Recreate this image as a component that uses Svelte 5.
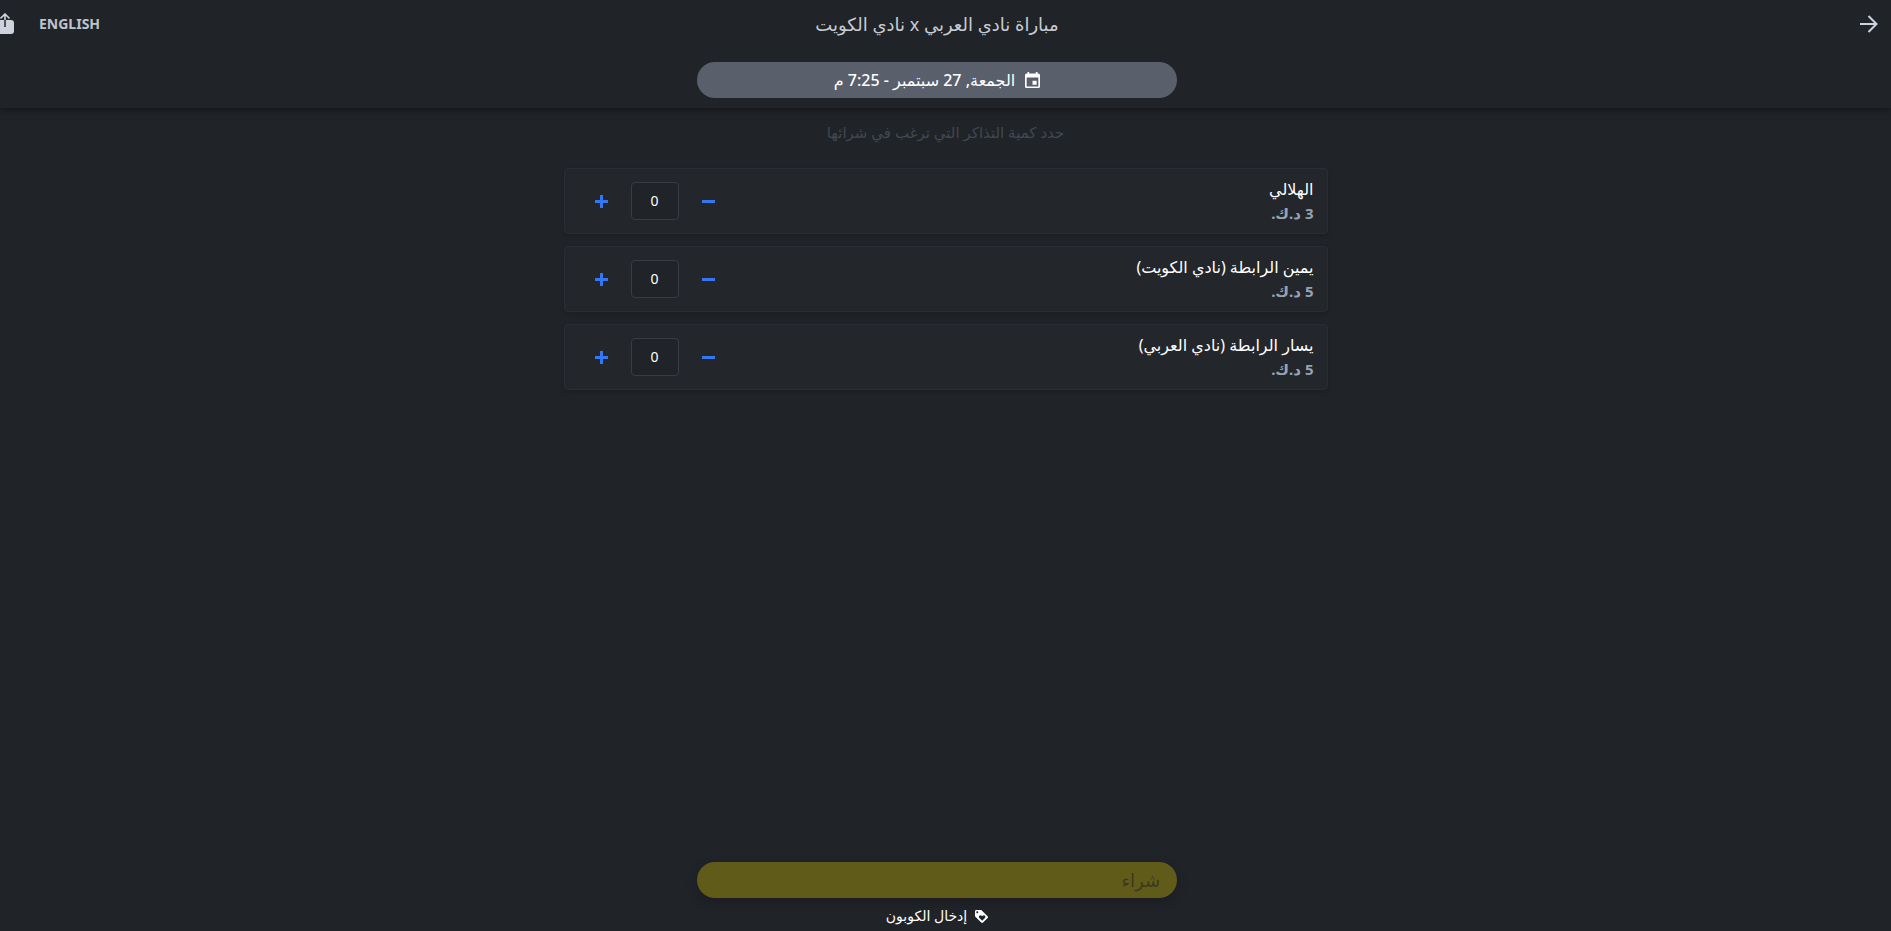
<script>
  let tickets = $state([
    { id: "hilali", name: "الهلالي", price: 3, qty: 0 },
    { id: "right", name: "يمين الرابطة (نادي الكويت)", price: 5, qty: 0 },
    { id: "left", name: "يسار الرابطة (نادي العربي)", price: 5, qty: 0 },
  ]);

  let total = $derived(tickets.reduce((sum, t) => sum + Number(t.qty), 0));
</script>

<div class="page" dir="rtl">
  <header>
    <div class="top-row">
      <a class="back" href="#back" aria-label="رجوع">
        <svg viewBox="0 0 18 18" width="18" height="18">
          <path d="M0 9h16M8.500 1l8 8-8 8" fill="none" stroke="currentColor" stroke-width="2" />
        </svg>
      </a>
      <h1>مباراة نادي العربي x نادي الكويت</h1>
      <div class="actions">
        <button class="lang" lang="en">ENGLISH</button>
        <button class="share" aria-label="مشاركة">
          <svg viewBox="0 0 18 22" width="18" height="22">
            <path d="M3 7h12a3 3 0 0 1 3 3v8a3 3 0 0 1-3 3H3a3 3 0 0 1-3-3v-8a3 3 0 0 1 3-3z" fill="currentColor" />
            <path d="M9 7v7" stroke="#4d525a" stroke-width="2" />
            <path d="M9 1v6M4.500 5.500L9 1l4.500 4.500" fill="none" stroke="currentColor" stroke-width="1.600" />
          </svg>
        </button>
      </div>
    </div>
    <button class="pill date">
      <svg viewBox="3 1 18 20" width="15" height="16" preserveAspectRatio="none">
        <path fill="currentColor" d="M17 12h-5v5h5v-5zM16 1v2H8V1H6v2H5c-1.110 0-1.990.9-1.990 2L3 19c0 1.100.89 2 2 2h14c1.100 0 2-.9 2-2V5c0-1.100-.9-2-2-2h-1V1h-2zm3 18H5V8h14v11z" />
      </svg>
      <span>الجمعة, 27 سبتمبر - 7:25 م</span>
    </button>
  </header>

  <main>
    <p class="hint">حدد كمية التذاكر التي ترغب في شرائها</p>
    <ul class="tickets">
      {#each tickets as ticket (ticket.id)}
        <li class="ticket">
          <div class="info">
            <label for={ticket.id}>{ticket.name}</label>
            <span class="price">{ticket.price} د.ك.</span>
          </div>
          <div class="counter">
            <button aria-label="إنقاص" onclick={() => (ticket.qty = Math.max(0, ticket.qty - 1))}>
              <svg viewBox="0 0 13 14" width="13" height="14"><path d="M0 7.500h13" /></svg>
            </button>
            <input id={ticket.id} type="text" inputmode="numeric" bind:value={ticket.qty} />
            <button aria-label="زيادة" onclick={() => ticket.qty++}>
              <svg viewBox="0 0 13 14" width="13" height="14"><path d="M0 7.500h13M6.500 1v13" /></svg>
            </button>
          </div>
        </li>
      {/each}
    </ul>
  </main>

  <footer>
    <button class="pill buy" disabled={total === 0}>شراء</button>
    <button class="coupon">
      <svg viewBox="2 2 20 20" width="13" height="13">
        <path fill="currentColor" d="M21.410 11.580l-9-9C12.050 2.220 11.550 2 11 2H4c-1.100 0-2 .9-2 2v7c0 .55.220 1.050.59 1.420l9 9c.36.360.860.580 1.410.580.550 0 1.050-.220 1.410-.590l7-7c.370-.360.590-.860.590-1.410 0-.550-.230-1.060-.590-1.420zM5.500 7C4.670 7 4 6.330 4 5.500S4.670 4 5.500 4 7 4.670 7 5.500 6.330 7 5.500 7zM17.270 14.270L13 18.540l-4.270-4.270C8.280 13.810 8 13.190 8 12.500c0-1.380 1.120-2.500 2.500-2.500.69 0 1.320.280 1.770.740l.73.720.73-.73c.45-.45 1.080-.73 1.770-.73 1.380 0 2.500 1.120 2.500 2.500 0 .69-.28 1.320-.73 1.770z" fill-rule="evenodd" />
      </svg>
      <span>إدخال الكوبون</span>
    </button>
  </footer>
</div>

<style>
  :global(body) {
    background: #202328;
  }

  .page {
    display: flex;
    flex-direction: column;
    min-height: 100vh;
    overflow: hidden;
    color: #fff;
    font-family: "Noto Sans", "DejaVu Sans", sans-serif;
    font-size: 16px;
    line-height: 24px;
  }

  button,
  input {
    margin: 0;
    padding: 0;
    border: 0;
    background: none;
    color: inherit;
    font: inherit;
  }

  button {
    cursor: pointer;
  }

  svg {
    display: block;
    flex: none;
  }

  header {
    display: flex;
    flex-direction: column;
    align-items: center;
    gap: 14px;
    padding: 0 17px 10px 0;
    background: #202328;
    box-shadow: 0 1px 8px rgba(0, 0, 0, 0.5);
  }

  .top-row {
    display: grid;
    grid-template-columns: 1fr auto 1fr;
    align-items: center;
    width: 100%;
    height: 48px;
    color: #ccd3dc;
  }

  .back {
    justify-self: start;
    margin-right: -4px;
    color: inherit;
  }

  h1 {
    margin: 0;
    color: #c8ccd2;
    font-size: 18px;
    font-weight: 400;
  }

  .actions {
    display: flex;
    align-items: center;
    justify-self: end;
    gap: 25px;
    margin-left: -4px;
  }

  .lang {
    color: #bfc4cb;
    font-size: 14px;
    font-weight: 700;
  }

  .pill {
    display: flex;
    align-items: center;
    box-sizing: border-box;
    width: 480px;
    max-width: 100%;
    height: 36px;
    border-radius: 18px;
  }

  .date {
    justify-content: center;
    gap: 10px;
    background: #59606b;
    font-weight: 500;
  }

  main {
    flex: 1;
    box-sizing: border-box;
    width: 100%;
    max-width: 764px;
    margin: 0 auto;
  }

  .hint {
    margin: 12px 0 24px;
    color: #414852;
    font-size: 15px;
    text-align: center;
  }

  .tickets {
    display: flex;
    flex-direction: column;
    gap: 12px;
    margin: 0;
    padding: 0;
    list-style: none;
  }

  .ticket {
    display: flex;
    align-items: center;
    justify-content: space-between;
    box-sizing: border-box;
    height: 66px;
    padding: 0 13px 0 19px;
    border: 1px solid #2a2d33;
    border-radius: 4px;
    background: #23262b;
    box-shadow: 0 2px 4px rgba(0, 0, 0, 0.15);
  }

  .info {
    display: flex;
    flex-direction: column;
  }

  .price {
    color: #98a2b0;
    font-size: 15px;
    font-weight: 700;
  }

  .counter {
    display: flex;
    align-items: center;
    gap: 12px;
  }

  .counter button {
    display: grid;
    place-items: center;
    width: 35px;
    height: 36px;
  }

  .counter path {
    stroke: #3577f1;
    stroke-width: 3;
  }

  .counter input {
    box-sizing: border-box;
    width: 48px;
    height: 38px;
    padding-bottom: 2px;
    border: 1px solid #383c45;
    border-radius: 4px;
    background: #202328;
    font-size: 14px;
    text-align: center;
  }

  footer {
    display: flex;
    flex-direction: column;
    align-items: center;
    gap: 6px;
    padding: 0 17px 3px 0;
  }

  .buy {
    padding: 0 17px;
    background: #615b1a;
    box-shadow: 0 4px 12px rgba(0, 0, 0, 0.2);
    color: #3b3920;
    font-size: 18px;
  }

  .coupon {
    display: flex;
    align-items: center;
    gap: 8px;
    font-size: 14px;
  }
</style>
